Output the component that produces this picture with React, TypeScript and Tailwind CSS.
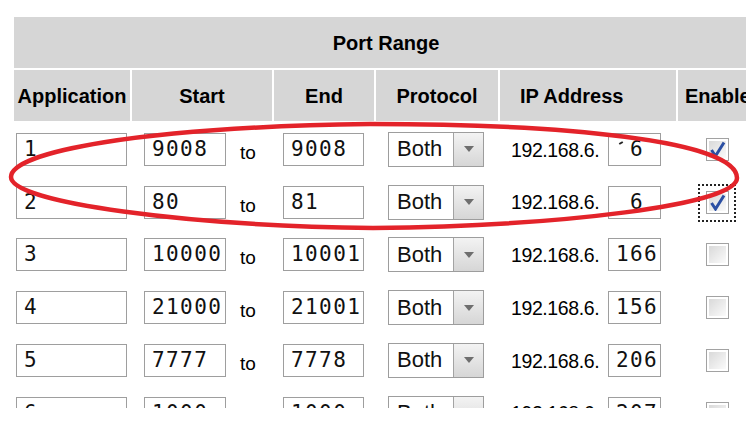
import React from "react";

type Row = {
  app: string;
  start: string;
  end: string;
  ip: string;
  checked?: boolean;
  focus?: boolean;
  tick?: boolean;
  dot?: boolean;
};

const rows: Row[] = [
  { app: "1", start: "9008", end: "9008", ip: "\u00a06", checked: true, tick: true },
  { app: "2", start: "80", end: "81", ip: "\u00a06", checked: true, focus: true, dot: true },
  { app: "3", start: "10000", end: "10001", ip: "166" },
  { app: "4", start: "21000", end: "21001", ip: "156" },
  { app: "5", start: "7777", end: "7778", ip: "206" },
  { app: "6", start: "1000", end: "1000", ip: "207" },
];

const mono = "font-['DejaVu_Sans_Mono',monospace] text-[21px] tracking-[1.4px] leading-none text-[#111]";

function TextBox({ value, w, ml, children }: { value: string; w: string; ml: string; children?: React.ReactNode }) {
  return (
    <div className={`relative ${ml} ${w} h-[33px] border border-[#9e9e9e] bg-white flex items-center pl-[7px] ${mono}`}>
      {value}
      {children}
    </div>
  );
}

function Select() {
  return (
    <div className="ml-[12px] w-[96px] h-[35px] border border-[#9d9d9d] bg-white flex items-stretch">
      <span className="flex-1 flex items-center pl-[8px] text-[22px] leading-none text-[#111]">Both</span>
      <div className="w-[30px] border-l border-[#a3a3a3] bg-linear-to-b from-[#f3f3f3] to-[#d6d6d6] flex items-center justify-center">
        <svg width="10" height="6" viewBox="0 0 10 6">
          <path d="M0 0 L10 0 L5 6 Z" fill="#6e6e6e" />
        </svg>
      </div>
    </div>
  );
}

function Checkbox({ checked, focus }: { checked?: boolean; focus?: boolean }) {
  return (
    <div className="relative ml-[28px] w-[23px] h-[23px]">
      {focus && (
        <div className="absolute left-[-8px] top-[-7px] w-[38px] h-[38px] border-2 border-dotted border-[#222]" />
      )}
      <div className="absolute inset-0 border border-[#a2a2a2] bg-white p-[2px]">
        <div className="w-full h-full bg-linear-to-br from-[#d9d9d9] to-[#fbfbfb] flex items-center justify-center">
          {checked && (
            <svg width="17" height="17" viewBox="0 0 17 17">
              <path d="M2.5 9 L6.5 15 L15 1.5" fill="none" stroke="#2b4fa3" strokeWidth="3" />
            </svg>
          )}
        </div>
      </div>
    </div>
  );
}

export default function App() {
  return (
    <div className="w-[746px] h-[428px] overflow-hidden bg-white relative font-['Liberation_Sans',Arial,sans-serif] text-black">
      <div className="pt-[17px] pl-[14px]">
        <div className="w-[744px] h-[391px] overflow-hidden">
          <div className="h-[51px] bg-[#d6d6d6] flex items-center justify-center font-bold text-[20px]">
            Port Range
          </div>
          <div className="mt-[2px] h-[51px] grid grid-cols-[116px_140px_100px_122px_176px_80px] gap-x-[2px] font-bold text-[20px]">
            <div className="bg-[#d6d6d6] flex items-center justify-center">Application</div>
            <div className="bg-[#d6d6d6] flex items-center justify-center">Start</div>
            <div className="bg-[#d6d6d6] flex items-center justify-center">End</div>
            <div className="bg-[#d6d6d6] flex items-center justify-center">Protocol</div>
            <div className="bg-[#d6d6d6] flex items-center pl-[20px]">IP Address</div>
            <div className="bg-[#d6d6d6] flex items-center pl-[7px]">Enable</div>
          </div>
          <div className="mt-[2px]">
            {rows.map((r, i) => (
              <div
                key={i}
                className="h-[52.75px] grid grid-cols-[116px_140px_100px_122px_176px_80px] gap-x-[2px] items-center"
              >
                <div className="flex items-center">
                  <TextBox value={r.app} w="w-[111px]" ml="ml-[2px]" />
                </div>
                <div className="flex items-center">
                  <TextBox value={r.start} w="w-[82px]" ml="ml-[12px]" />
                  <span className="ml-[14px] mt-[6px] text-[19px] leading-none">to</span>
                </div>
                <div className="flex items-center">
                  <TextBox value={r.end} w="w-[81px]" ml="ml-[9px]" />
                </div>
                <div className="flex items-center">
                  <Select />
                </div>
                <div className="flex items-center">
                  <span className="ml-[11px] w-[97px] text-[19.5px] leading-none tracking-[-0.4px] mt-[2px]">192.168.6.</span>
                  <TextBox value={r.ip} w="w-[53px]" ml="ml-0">
                    {r.tick && <span className="absolute left-[10px] top-[8px] w-[4px] h-[2px] bg-[#222] rotate-[-30deg]" />}
                    {r.dot && <span className="absolute left-[37px] top-[22px] w-[2px] h-[2px] bg-[#222]" />}
                  </TextBox>
                </div>
                <div className="flex items-center">
                  <Checkbox checked={r.checked} focus={r.focus} />
                </div>
              </div>
            ))}
          </div>
        </div>
      </div>
      <svg className="absolute left-0 top-0 pointer-events-none" width="746" height="428" viewBox="0 0 746 428">
        <path
          d="M11 177 C11 152 140 127 370 124 C560 124 737 140 737 178 C737 205 560 226 373 228 C190 226 11 203 11 177 Z"
          fill="none"
          stroke="#e3232a"
          strokeWidth="4.5"
        />
      </svg>
    </div>
  );
}
